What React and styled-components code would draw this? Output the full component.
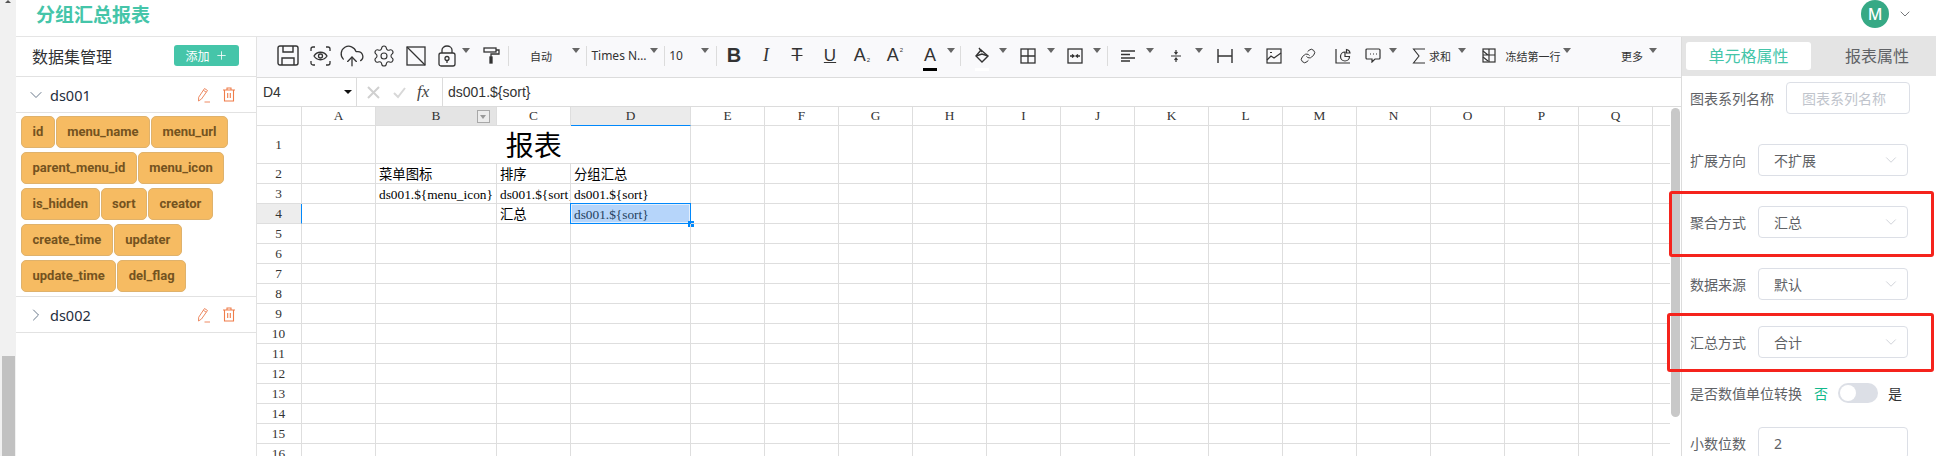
import React from 'react';
import styled, { createGlobalStyle } from 'styled-components';
import { ChevronDown, ChevronRight, CloudUpload, Settings, Link, Plus } from 'lucide-react';

const GlobalStyle = createGlobalStyle`
    html, body {
        margin: 0;
        padding: 0;
        overflow: hidden;
        background: #fff;
    }
    * {
        box-sizing: border-box;
    }
`;

const UI_FONT = `"Noto Sans", "Noto Sans CJK SC", sans-serif`;
const CELL_FONT = `"Liberation Serif", "Noto Sans CJK SC", serif`;
const GREEN = '#45c5a9';
const LINE = '#dedede';

const Page = styled.div`
    position: relative;
    width: 1936px;
    height: 456px;
    display: flex;
    overflow: hidden;
    font-family: ${UI_FONT};
    color: #333;
`;

const Rail = styled.div`
    position: relative;
    width: 16px;
    flex: none;
    background: #f1f1f1;
    display: flex;
    flex-direction: column;
    justify-content: flex-end;
    align-items: center;
    &::before {
        content: '';
        position: absolute;
        top: 0;
        left: 5px;
        border-left: 3px solid transparent;
        border-right: 3px solid transparent;
        border-bottom: 3px solid #555;
    }
`;

const RailThumb = styled.div`
    width: 13px;
    height: 100px;
    background: #c1c1c1;
`;

const Content = styled.div`
    flex: 1;
    min-width: 0;
    display: flex;
    flex-direction: column;
`;

const Header = styled.header`
    height: 37px;
    flex: none;
    border-bottom: 1px solid #e5e5e5;
    display: flex;
    justify-content: space-between;
    padding: 0 23px 0 20px;
`;

const Title = styled.div`
    font-size: 19px;
    font-weight: 700;
    line-height: 30px;
    color: ${GREEN};
`;

const User = styled.div`
    display: flex;
    align-items: flex-start;
    gap: 8px;
    color: #606266;
    svg {
        margin-top: 6px;
    }
`;

const Avatar = styled.div`
    width: 28px;
    height: 28px;
    border-radius: 50%;
    background: #36a985;
    color: #fff;
    font-size: 16px;
    font-weight: 500;
    line-height: 28px;
    text-align: center;
`;

const Body = styled.div`
    flex: 1;
    min-height: 0;
    display: flex;
`;

const Sidebar = styled.aside`
    width: 241px;
    flex: none;
    border-right: 1px solid #e2e2e2;
`;

const SidebarHead = styled.div`
    height: 40px;
    border-bottom: 1px solid #e2e2e2;
    display: flex;
    align-items: center;
    justify-content: space-between;
    padding: 0 17px 2px 16px;
    font-size: 16px;
    color: #303133;
`;

const AddButton = styled.div`
    width: 65px;
    height: 21px;
    border-radius: 3px;
    background: ${GREEN};
    color: #fff;
    font-size: 12px;
    display: flex;
    align-items: center;
    justify-content: center;
    gap: 5px;
`;

const DatasetRow = styled.div`
    height: 36px;
    border-bottom: 1px solid #e2e2e2;
    display: flex;
    align-items: center;
    padding: 0 20px 0 10px;
    font-size: 14.5px;
    color: #1f2d3d;
`;

const Arrow = styled.span`
    width: 24px;
    display: flex;
    color: #5b6b7f;
`;

const DatasetName = styled.span`
    flex: 1;
`;

const RowIcons = styled.span`
    display: flex;
    gap: 11px;
`;

const Tags = styled.div`
    display: flex;
    flex-wrap: wrap;
    gap: 4px 1px;
    padding: 3px 5px 4px 5px;
    border-bottom: 1px solid #e2e2e2;
`;

const Tag = styled.div`
    height: 32px;
    padding: 0 10.5px;
    border: 1px solid #dfb26c;
    border-radius: 5px;
    background: #f6bb62;
    color: #74531f;
    font-family: Roboto, sans-serif;
    font-size: 13px;
    font-weight: 700;
    line-height: 30px;
`;

const Main = styled.main`
    width: 1425px;
    flex: none;
    display: flex;
    flex-direction: column;
    border-right: 1px solid #dcdcdc;
`;

const Toolbar = styled.div`
    height: 41px;
    flex: none;
    background: #f9f9fb;
    border-bottom: 1px solid #dcdcdc;
    display: flex;
    align-items: center;
    padding: 0 0 3px 15px;
`;

const Tool = styled.div`
    width: ${(p) => p.$w}px;
    margin-left: ${(p) => p.$ml || 0}px;
    flex: none;
    height: 24px;
    display: flex;
    align-items: center;
    justify-content: center;
    white-space: nowrap;
    color: #333;
    font-size: ${(p) => p.$size || 11}px;
    font-family: ${(p) => p.$font || 'inherit'};
    font-weight: ${(p) => p.$weight || 400};
    font-style: ${(p) => p.$italic ? 'italic' : 'normal'};
    position: relative;
`;

const Caret = styled.div`
    width: 8px;
    margin-left: ${(p) => p.$ml || 0}px;
    flex: none;
    height: 0;
    align-self: flex-start;
    margin-top: 11px;
    border-left: 4px solid transparent;
    border-right: 4px solid transparent;
    border-top: 5px solid #666;
`;

const ToolSep = styled.div`
    width: 1px;
    height: 20px;
    flex: none;
    margin-left: ${(p) => p.$ml || 0}px;
    background: #dcdcdc;
`;

const ColorBar = styled.span`
    position: absolute;
    left: 50%;
    bottom: -3px;
    width: 14px;
    height: 3px;
    margin-left: -7px;
    background: ${(p) => p.$color};
`;

const Small = styled.span`
    font-size: 6px;
    align-self: ${(p) => (p.$up ? 'flex-start' : 'flex-end')};
    margin: ${(p) => (p.$up ? '3px 0 0 1px' : '0 0 5px 1px')};
`;

const FormulaBar = styled.div`
    height: 29px;
    flex: none;
    border-bottom: 1px solid #dcdcdc;
    display: flex;
    align-items: center;
    font-family: "Liberation Sans", sans-serif;
    font-size: 14px;
`;

const NameBox = styled.div`
    width: 100px;
    height: 100%;
    border-right: 1px solid #dcdcdc;
    padding: 0 4px 0 6px;
    display: flex;
    align-items: center;
    justify-content: space-between;
`;

const NameCaret = styled.span`
    border-left: 4px solid transparent;
    border-right: 4px solid transparent;
    border-top: 4px solid #111;
`;

const FormulaTools = styled.div`
    width: 86px;
    height: 100%;
    border-right: 1px solid #dcdcdc;
    padding-left: 10px;
    display: flex;
    align-items: center;
    gap: 13px;
    color: #d0d0d0;
`;

const Fx = styled.span`
    font-family: "Liberation Serif", serif;
    font-style: italic;
    font-size: 17px;
    color: #444;
    margin-left: -2px;
`;

const FormulaText = styled.div`
    padding-left: 5px;
    color: #333;
`;

const SheetWrap = styled.div`
    flex: 1;
    min-height: 0;
    display: flex;
`;

const Sheet = styled.div`
    width: 1413px;
    flex: none;
    overflow: hidden;
    display: grid;
    grid-template-columns: 45px 74px 121px 74px 120px repeat(14, 74px);
    grid-template-rows: 19px 38px repeat(15, 20px);
    font-family: ${CELL_FONT};
    font-size: 13.33px;
    color: #000;
`;

const Cell = styled.div`
    position: relative;
    min-width: 0;
    border-right: 1px solid ${LINE};
    border-bottom: 1px solid ${LINE};
    padding: 2px 0 0 3px;
    line-height: 18px;
    white-space: nowrap;
    overflow: ${(p) => (p.$selected ? 'visible' : 'hidden')};
    ${(p) => p.$span && `grid-column: span ${p.$span};`}
`;

const ColHead = styled.div`
    position: relative;
    border-right: 1px solid ${LINE};
    border-bottom: 1px solid ${(p) => (p.$active ? '#0188fb' : LINE)};
    background: ${(p) => (p.$active ? '#ebebeb' : p.$soft ? '#e4e4e4' : '#fff')};
    color: #333;
    font-size: 13.33px;
    line-height: 18px;
    text-align: center;
`;

const FilterBtn = styled.span`
    position: absolute;
    right: 6px;
    top: 3px;
    width: 13px;
    height: 13px;
    border: 1px solid #a8a8a8;
    background: #ececec;
    &::after {
        content: '';
        position: absolute;
        left: 2px;
        top: 4px;
        border-left: 3.5px solid transparent;
        border-right: 3.5px solid transparent;
        border-top: 4px solid #999;
    }
`;

const RowHead = styled.div`
    border-right: 1px solid ${(p) => (p.$active ? '#0188fb' : LINE)};
    border-bottom: 1px solid ${LINE};
    background: ${(p) => (p.$active ? '#ededed' : '#fff')};
    color: #333;
    display: flex;
    align-items: center;
    justify-content: center;
    padding-right: 1px;
`;

const BigTitle = styled.div`
    height: 100%;
    display: flex;
    align-items: center;
    justify-content: center;
    font-size: 28px;
    margin-left: -1.5px;
    padding-top: 2px;
`;

const Selection = styled.div`
    position: absolute;
    left: -1px;
    top: -1px;
    right: -1px;
    bottom: -1px;
    border: 1px solid #0188fb;
    background: #b6d5fa;
    box-shadow: inset 0 0 0 1px #e4effc;
    padding: 2px 0 0 3px;
    line-height: 18px;
    color: #243f60;
`;

const Handle = styled.span`
    position: absolute;
    right: -4px;
    bottom: -4px;
    width: 6px;
    height: 6px;
    background: #0188fb;
`;

const ScrollTrack = styled.div`
    flex: 1;
    padding: 1px 1px 0 1px;
`;

const ScrollThumb = styled.div`
    width: 9px;
    height: 309px;
    border-radius: 5px;
    background: #c8c8c8;
`;

const Panel = styled.aside`
    flex: 1;
    min-width: 0;
    color: #606266;
    font-size: 14px;
`;

const Tabs = styled.div`
    height: 40px;
    margin-top: -1px;
    background: #e4e4e4;
    display: flex;
    align-items: center;
    padding-left: 4px;
    position: relative;
`;

const TabItem = styled.div`
    width: ${(p) => (p.$active ? '125px' : '118px')};
    margin-left: ${(p) => (p.$active ? 0 : '7px')};
    height: 28px;
    border-radius: 3px;
    background: ${(p) => (p.$active ? '#fff' : 'transparent')};
    color: ${(p) => (p.$active ? GREEN : '#606266')};
    font-size: 16px;
    line-height: 28px;
    text-align: center;
`;

const Form = styled.div`
    padding: 6px 0 0 8px;
`;

const FormRow = styled.div`
    display: flex;
    align-items: center;
    gap: ${(p) => p.$gap ?? 12}px;
    margin-bottom: ${(p) => p.$mb ?? 30}px;
    height: ${(p) => p.$h || 32}px;
`;

const Field = styled.div`
    width: ${(p) => p.$w || 150}px;
    height: 32px;
    flex: none;
    border: 1px solid #dcdfe6;
    border-radius: 4px;
    padding: 0 7px 0 15px;
    display: flex;
    align-items: center;
    justify-content: space-between;
    color: ${(p) => (p.$placeholder ? '#c0c4cc' : '#606266')};
    svg {
        color: #c0c4cc;
    }
`;

const SwitchNo = styled.span`
    margin-left: 2px;
    color: #13b98c;
`;

const SwitchYes = styled.span`
    color: #303133;
`;

const Switch = styled.span`
    width: 40px;
    height: 20px;
    border-radius: 10px;
    background: #dcdfe6;
    padding: 2px;
    display: flex;
    &::before {
        content: '';
        width: 16px;
        height: 16px;
        border-radius: 50%;
        background: #fff;
    }
`;

const RedBox = styled.div`
    position: absolute;
    left: ${(p) => p.$x}px;
    top: ${(p) => p.$y}px;
    width: ${(p) => p.$w}px;
    height: ${(p) => p.$h}px;
    border: 3px solid #f5231c;
    border-radius: 3px;
    pointer-events: none;
`;

const Line = ({ w = 20, h = 20, children, color = '#333', sw = 1.3 }) => (
    <svg width={w} height={h} viewBox={`0 0 ${w} ${h}`} fill="none" stroke={color} strokeWidth={sw}>
        {children}
    </svg>
);

const SaveIcon = () => (
    <Line w={22} h={21} sw={1.4}>
        <path d="M3 1h16a2 2 0 0 1 2 2v15a2 2 0 0 1-2 2H3a2 2 0 0 1-2-2V3a2 2 0 0 1 2-2z" />
        <path d="M6 1v6h10V1M5 20v-7h12v7" />
    </Line>
);

const EyeIcon = () => (
    <Line w={21} h={20}>
        <path d="M1 5V3a2 2 0 0 1 2-2h2M16 1h2a2 2 0 0 1 2 2v2M20 15v2a2 2 0 0 1-2 2h-2M5 19H3a2 2 0 0 1-2-2v-2" />
        <path d="M4 10c3-5 10-5 13 0-3 5-10 5-13 0z" />
        <circle cx="10.5" cy="10" r="2" />
    </Line>
);

const DiagonalIcon = () => (
    <Line w={20} h={20}>
        <rect x="1" y="1" width="18" height="18" />
        <path d="M1 1l18 18" />
    </Line>
);

const LockIcon = () => (
    <Line w={18} h={22}>
        <rect x="1" y="8" width="16" height="13" rx="2" />
        <path d="M4 8V5a5 4 0 0 1 10 0v3" />
        <circle cx="9" cy="13.5" r="2" />
        <path d="M9 15.5V18" />
    </Line>
);

const RollerIcon = () => (
    <Line w={17} h={17} sw={1.3}>
        <rect x="1" y="1" width="12" height="4" />
        <path d="M13 3h3v4H8v3" />
        <rect x="7" y="10" width="2" height="6" fill="#333" />
    </Line>
);

const FillIcon = () => (
    <Line w={16} h={18} sw={1.4}>
        <path d="M7 3l7 6-6 6-6-6z" />
        <path d="M2 9l6-2 6 2M5 1l3 4" />
    </Line>
);

const BorderIcon = () => (
    <Line w={16} h={16} sw={1.3}>
        <rect x="1" y="1" width="14" height="14" />
        <path d="M8 1v14M1 8h14" />
    </Line>
);

const MergeIcon = () => (
    <Line w={16} h={16}>
        <rect x="1" y="1" width="14" height="14" />
        <path d="M3 8h3M13 8h-3" />
        <path d="M5 6.5L7 8 5 9.5M11 6.5L9 8l2 1.5" fill="#333" />
    </Line>
);

const AlignIcon = () => (
    <Line w={16} h={12}>
        <path d="M1 1h14M1 4.5h9M1 8h14M1 11h9" />
    </Line>
);

const ValignIcon = () => (
    <Line w={12} h={14} sw={1.2}>
        <path d="M1 7h10M6 1v3.5M6 9.5V13M4.5 3L6 5l1.5-2M4.5 11L6 9l1.5 2" />
    </Line>
);

const WidthIcon = () => (
    <Line w={16} h={16} sw={1.4}>
        <path d="M1 1v14M15 1v14M1 8h14" />
    </Line>
);

const ImageIcon = () => (
    <Line w={16} h={16} sw={1.2}>
        <rect x="1" y="1" width="14" height="14" />
        <path d="M1 12l4-4 3 2 7-5M4 4.5h2" />
    </Line>
);

const ChartIcon = () => (
    <Line w={16} h={16} sw={1.2}>
        <path d="M1 1v14h14" />
        <path d="M10 4a4.5 4.5 0 1 0 4.5 4.5H10zM11.5 1.5a4 4 0 0 1 3.5 3.5h-3.5z" />
    </Line>
);

const CommentIcon = () => (
    <Line w={16} h={15} sw={1.2}>
        <path d="M2 1h12a1 1 0 0 1 1 1v8a1 1 0 0 1-1 1h-4l-3 3v-3H2a1 1 0 0 1-1-1V2a1 1 0 0 1 1-1z" />
        <path d="M5 6h1M8 6h1M11 6h1" />
    </Line>
);

const SumIcon = () => (
    <Line w={14} h={16} sw={1.1}>
        <path d="M13 1H1.5L7 8l-5.5 7H13" />
    </Line>
);

const FreezeIcon = () => (
    <Line w={14} h={15} sw={1.2}>
        <rect x="1" y="1" width="12" height="13" />
        <path d="M1 7h12M7 1v13M1 3l5 4M1 9l5 4" />
    </Line>
);

const PencilIcon = () => (
    <svg width="14" height="16" viewBox="0 0 14 16" fill="none" stroke="#ee8a62" strokeWidth="1">
        <path d="M7.5 1.5l3 2-6 8.5-3 2 .2-3.8z" />
        <path d="M6.2 3.2l3 2" />
        <path d="M7.5 15H13" />
    </svg>
);

const TrashIcon = () => (
    <svg width="14" height="15" viewBox="0 0 14 15" fill="none" stroke="#ef7d4a" strokeWidth="1.1">
        <path d="M1 3h12M5 3V1h4v2M2.5 3v11h9V3M5.7 6v5M8.3 6v5" />
    </svg>
);

const DS_TAGS = ['id', 'menu_name', 'menu_url', 'parent_menu_id', 'menu_icon', 'is_hidden', 'sort', 'creator', 'create_time', 'updater', 'update_time', 'del_flag'];
const COLS = ['A', 'B', 'C', 'D', 'E', 'F', 'G', 'H', 'I', 'J', 'K', 'L', 'M', 'N', 'O', 'P', 'Q', 'R'];

const CELLS = {
    'B2': '菜单图标',
    'C2': '排序',
    'D2': '分组汇总',
    'B3': 'ds001.${menu_icon}',
    'C3': 'ds001.${sort}',
    'D3': 'ds001.${sort}',
    'C4': '汇总',
};

const DatasetIcons = () => (
    <RowIcons>
        <PencilIcon />
        <TrashIcon />
    </RowIcons>
);

const SheetGrid = () => {
    const rows = [];
    for (let r = 1; r <= 16; r++) {
        const cells = [];
        COLS.forEach((c) => {
            const key = c + r;
            if (r === 1 && (c === 'C' || c === 'D')) return;
            if (r === 1 && c === 'B') {
                cells.push(<Cell key={key} $span={3}><BigTitle>报表</BigTitle></Cell>);
            } else if (key === 'D4') {
                cells.push(
                    <Cell key={key} $selected>
                        <Selection>ds001.{'${sort}'}<Handle /></Selection>
                    </Cell>
                );
            } else {
                cells.push(<Cell key={key}>{CELLS[key]}</Cell>);
            }
        });
        rows.push(
            <React.Fragment key={r}>
                <RowHead $active={r === 4}>{r}</RowHead>
                {cells}
            </React.Fragment>
        );
    }
    return (
        <Sheet>
            <ColHead />
            {COLS.map((c) => (
                <ColHead key={c} $soft={c === 'B'} $active={c === 'D'}>
                    {c === 'R' ? '' : c}
                    {c === 'B' && <FilterBtn />}
                </ColHead>
            ))}
            {rows}
        </Sheet>
    );
};

const TopToolbar = () => (
    <Toolbar>
        <Tool $w={32}><SaveIcon /></Tool>
        <Tool $w={32}><EyeIcon /></Tool>
        <Tool $w={32}><CloudUpload size={26} strokeWidth={1.2} /></Tool>
        <Tool $w={32}><Settings size={24} strokeWidth={1.1} /></Tool>
        <Tool $w={32}><DiagonalIcon /></Tool>
        <Tool $w={30}><LockIcon /></Tool>
        <Caret />
        <Tool $w={18} $ml={12}><RollerIcon /></Tool>
        <ToolSep $ml={8} />
        <Tool $w={62} $ml={1}>自动</Tool>
        <Caret />
        <ToolSep $ml={6} />
        <Tool $w={54} $ml={5} $size={12}>Times N…</Tool>
        <Caret $ml={4} />
        <ToolSep $ml={6} />
        <Tool $w={22} $size={12}>10</Tool>
        <Caret $ml={14} />
        <ToolSep $ml={7} />
        <Tool $w={34} $size={20} $weight={700} $font='"Liberation Sans", sans-serif'>B</Tool>
        <Tool $w={30} $size={18} $italic $font='"Liberation Serif", serif'>I</Tool>
        <Tool $w={32} $size={18} $font='"Liberation Sans", sans-serif'><s>T</s></Tool>
        <Tool $w={34} $size={17} $font='"Liberation Sans", sans-serif'><u>U</u></Tool>
        <Tool $w={30} $size={18} $font='"Liberation Sans", sans-serif'>A<Small>2</Small></Tool>
        <Tool $w={36} $size={18} $font='"Liberation Sans", sans-serif'>A<Small $up>2</Small></Tool>
        <Tool $w={34} $size={18} $font='"Liberation Sans", sans-serif'>A<ColorBar $color="#000" /></Tool>
        <Caret />
        <ToolSep $ml={5} />
        <Tool $w={20} $ml={11}><FillIcon /><ColorBar $color="#fff" /></Tool>
        <Caret $ml={7} />
        <Tool $w={22} $ml={10}><BorderIcon /></Tool>
        <Caret $ml={8} />
        <Tool $w={20} $ml={10}><MergeIcon /></Tool>
        <Caret $ml={8} />
        <ToolSep $ml={6} />
        <Tool $w={16} $ml={12}><AlignIcon /></Tool>
        <Caret $ml={10} />
        <Tool $w={12} $ml={16}><ValignIcon /></Tool>
        <Caret $ml={13} />
        <Tool $w={16} $ml={14}><WidthIcon /></Tool>
        <Caret $ml={11} />
        <Tool $w={16} $ml={14}><ImageIcon /></Tool>
        <Tool $w={16} $ml={18}><Link size={16} strokeWidth={1.5} /></Tool>
        <Tool $w={16} $ml={19}><ChartIcon /></Tool>
        <Tool $w={16} $ml={14}><CommentIcon /></Tool>
        <Caret $ml={8} />
        <Tool $w={14} $ml={15}><SumIcon /></Tool>
        <Tool $w={22} $ml={3}>求和</Tool>
        <Caret $ml={7} />
        <Tool $w={14} $ml={16}><FreezeIcon /></Tool>
        <Tool $w={56} $ml={9}>冻结第一行</Tool>
        <Caret $ml={2} />
        <Tool $w={22} $ml={50}>更多</Tool>
        <Caret $ml={6} />
    </Toolbar>
);

const App = () => {
    return (
        <Page>
            <GlobalStyle />
            <Rail>
                <RailThumb />
            </Rail>
            <Content>
                <Header>
                    <Title>分组汇总报表</Title>
                    <User>
                        <Avatar>M</Avatar>
                        <ChevronDown size={16} strokeWidth={1.3} />
                    </User>
                </Header>
                <Body>
                    <Sidebar>
                        <SidebarHead>
                            数据集管理
                            <AddButton>添加 <Plus size={13} strokeWidth={1.5} /></AddButton>
                        </SidebarHead>
                        <DatasetRow>
                            <Arrow><ChevronDown size={20} strokeWidth={1.1} /></Arrow>
                            <DatasetName>ds001</DatasetName>
                            <DatasetIcons />
                        </DatasetRow>
                        <Tags>
                            {DS_TAGS.map((t) => <Tag key={t}>{t}</Tag>)}
                        </Tags>
                        <DatasetRow>
                            <Arrow><ChevronRight size={20} strokeWidth={1.1} /></Arrow>
                            <DatasetName>ds002</DatasetName>
                            <DatasetIcons />
                        </DatasetRow>
                    </Sidebar>
                    <Main>
                        <TopToolbar />
                        <FormulaBar>
                            <NameBox>D4<NameCaret /></NameBox>
                            <FormulaTools>
                                <Line w={13} h={13} color="#d0d0d0" sw={2}><path d="M1 1l11 11M12 1L1 12" /></Line>
                                <Line w={13} h={13} color="#d8d8d8" sw={2}><path d="M1 7l4 4 7-9" /></Line>
                                <Fx>fx</Fx>
                            </FormulaTools>
                            <FormulaText>ds001.{'${sort}'}</FormulaText>
                        </FormulaBar>
                        <SheetWrap>
                            <SheetGrid />
                            <ScrollTrack><ScrollThumb /></ScrollTrack>
                        </SheetWrap>
                    </Main>
                    <Panel>
                        <Tabs>
                            <TabItem $active>单元格属性</TabItem>
                            <TabItem>报表属性</TabItem>
                        </Tabs>
                        <Form>
                            <FormRow>
                                图表系列名称
                                <Field $w={124} $placeholder>图表系列名称</Field>
                            </FormRow>
                            <FormRow>
                                扩展方向
                                <Field>不扩展<ChevronDown size={18} strokeWidth={1} /></Field>
                            </FormRow>
                            <FormRow>
                                聚合方式
                                <Field>汇总<ChevronDown size={18} strokeWidth={1} /></Field>
                            </FormRow>
                            <FormRow $mb={26}>
                                数据来源
                                <Field>默认<ChevronDown size={18} strokeWidth={1} /></Field>
                            </FormRow>
                            <FormRow $mb={25}>
                                汇总方式
                                <Field>合计<ChevronDown size={18} strokeWidth={1} /></Field>
                            </FormRow>
                            <FormRow $h={20} $mb={24} $gap={10}>
                                <span>是否数值单位转换</span>
                                <SwitchNo>否</SwitchNo>
                                <Switch />
                                <SwitchYes>是</SwitchYes>
                            </FormRow>
                            <FormRow>
                                小数位数
                                <Field>2</Field>
                            </FormRow>
                        </Form>
                    </Panel>
                </Body>
            </Content>
            <RedBox $x={1669} $y={191} $w={265} $h={66} />
            <RedBox $x={1667} $y={313} $w={267} $h={59} />
        </Page>
    );
};

export default App;
